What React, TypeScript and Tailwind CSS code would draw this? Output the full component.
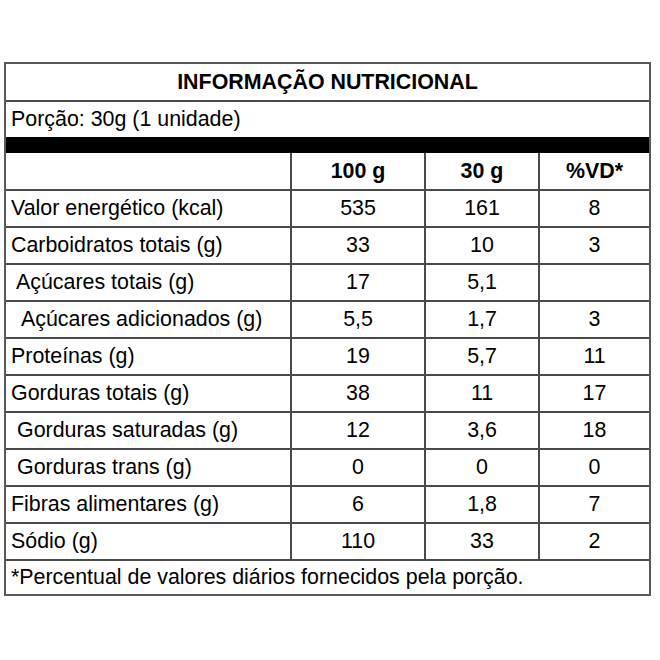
import React from "react";

type Row = { label: string; indent?: string; a: string; b: string; vd: string };

const rows: Row[] = [
  { label: "Valor energético (kcal)", a: "535", b: "161", vd: "8" },
  { label: "Carboidratos totais (g)", a: "33", b: "10", vd: "3" },
  { label: "Açúcares totais (g)", indent: "pl-[10px]", a: "17", b: "5,1", vd: "" },
  { label: "Açúcares adicionados (g)", indent: "pl-[15px]", a: "5,5", b: "1,7", vd: "3" },
  { label: "Proteínas (g)", a: "19", b: "5,7", vd: "11" },
  { label: "Gorduras totais (g)", a: "38", b: "11", vd: "17" },
  { label: "Gorduras saturadas (g)", indent: "pl-[11px]", a: "12", b: "3,6", vd: "18" },
  { label: "Gorduras trans (g)", indent: "pl-[11px]", a: "0", b: "0", vd: "0" },
  { label: "Fibras alimentares (g)", a: "6", b: "1,8", vd: "7" },
  { label: "Sódio (g)", a: "110", b: "33", vd: "2" },
];

const cols = "grid grid-cols-[284px_134px_114px_1fr]";
const line = "border-[#4a4a4a]";

export default function App() {
  return (
    <div className="min-h-[660px] bg-white pt-[62px] pl-[4px] font-['Liberation_Sans',Arial,sans-serif] text-[21.4px] text-black">
      <div className="w-[647px] border-2 border-[#5a5a5a]">
        <div className={`flex h-[38px] items-center justify-center border-b-2 ${line} font-bold`}>
          INFORMAÇÃO NUTRICIONAL
        </div>
        <div className="flex h-[35px] items-center pl-[5px]">Porção: 30g (1 unidade)</div>
        <div className="h-[16px] bg-black" />

        <div className={`${cols} h-[38px] border-b-2 ${line} font-bold`}>
          <div />
          <div className={`flex items-center justify-center border-l-2 ${line}`}>100 g</div>
          <div className={`flex items-center justify-center border-l-2 ${line}`}>30 g</div>
          <div className={`flex items-center justify-center border-l-2 ${line}`}>%VD*</div>
        </div>

        {rows.map((r) => (
          <div key={r.label} className={`${cols} h-[37px] border-b-2 ${line}`}>
            <div className={`flex items-center ${r.indent ?? "pl-[5px]"}`}>{r.label}</div>
            <div className={`flex items-center justify-center border-l-2 ${line}`}>{r.a}</div>
            <div className={`flex items-center justify-center border-l-2 ${line}`}>{r.b}</div>
            <div className={`flex items-center justify-center border-l-2 ${line}`}>{r.vd}</div>
          </div>
        ))}

        <div className="flex h-[33px] items-center pl-[5px]">
          *Percentual de valores diários fornecidos pela porção.
        </div>
      </div>
    </div>
  );
}
